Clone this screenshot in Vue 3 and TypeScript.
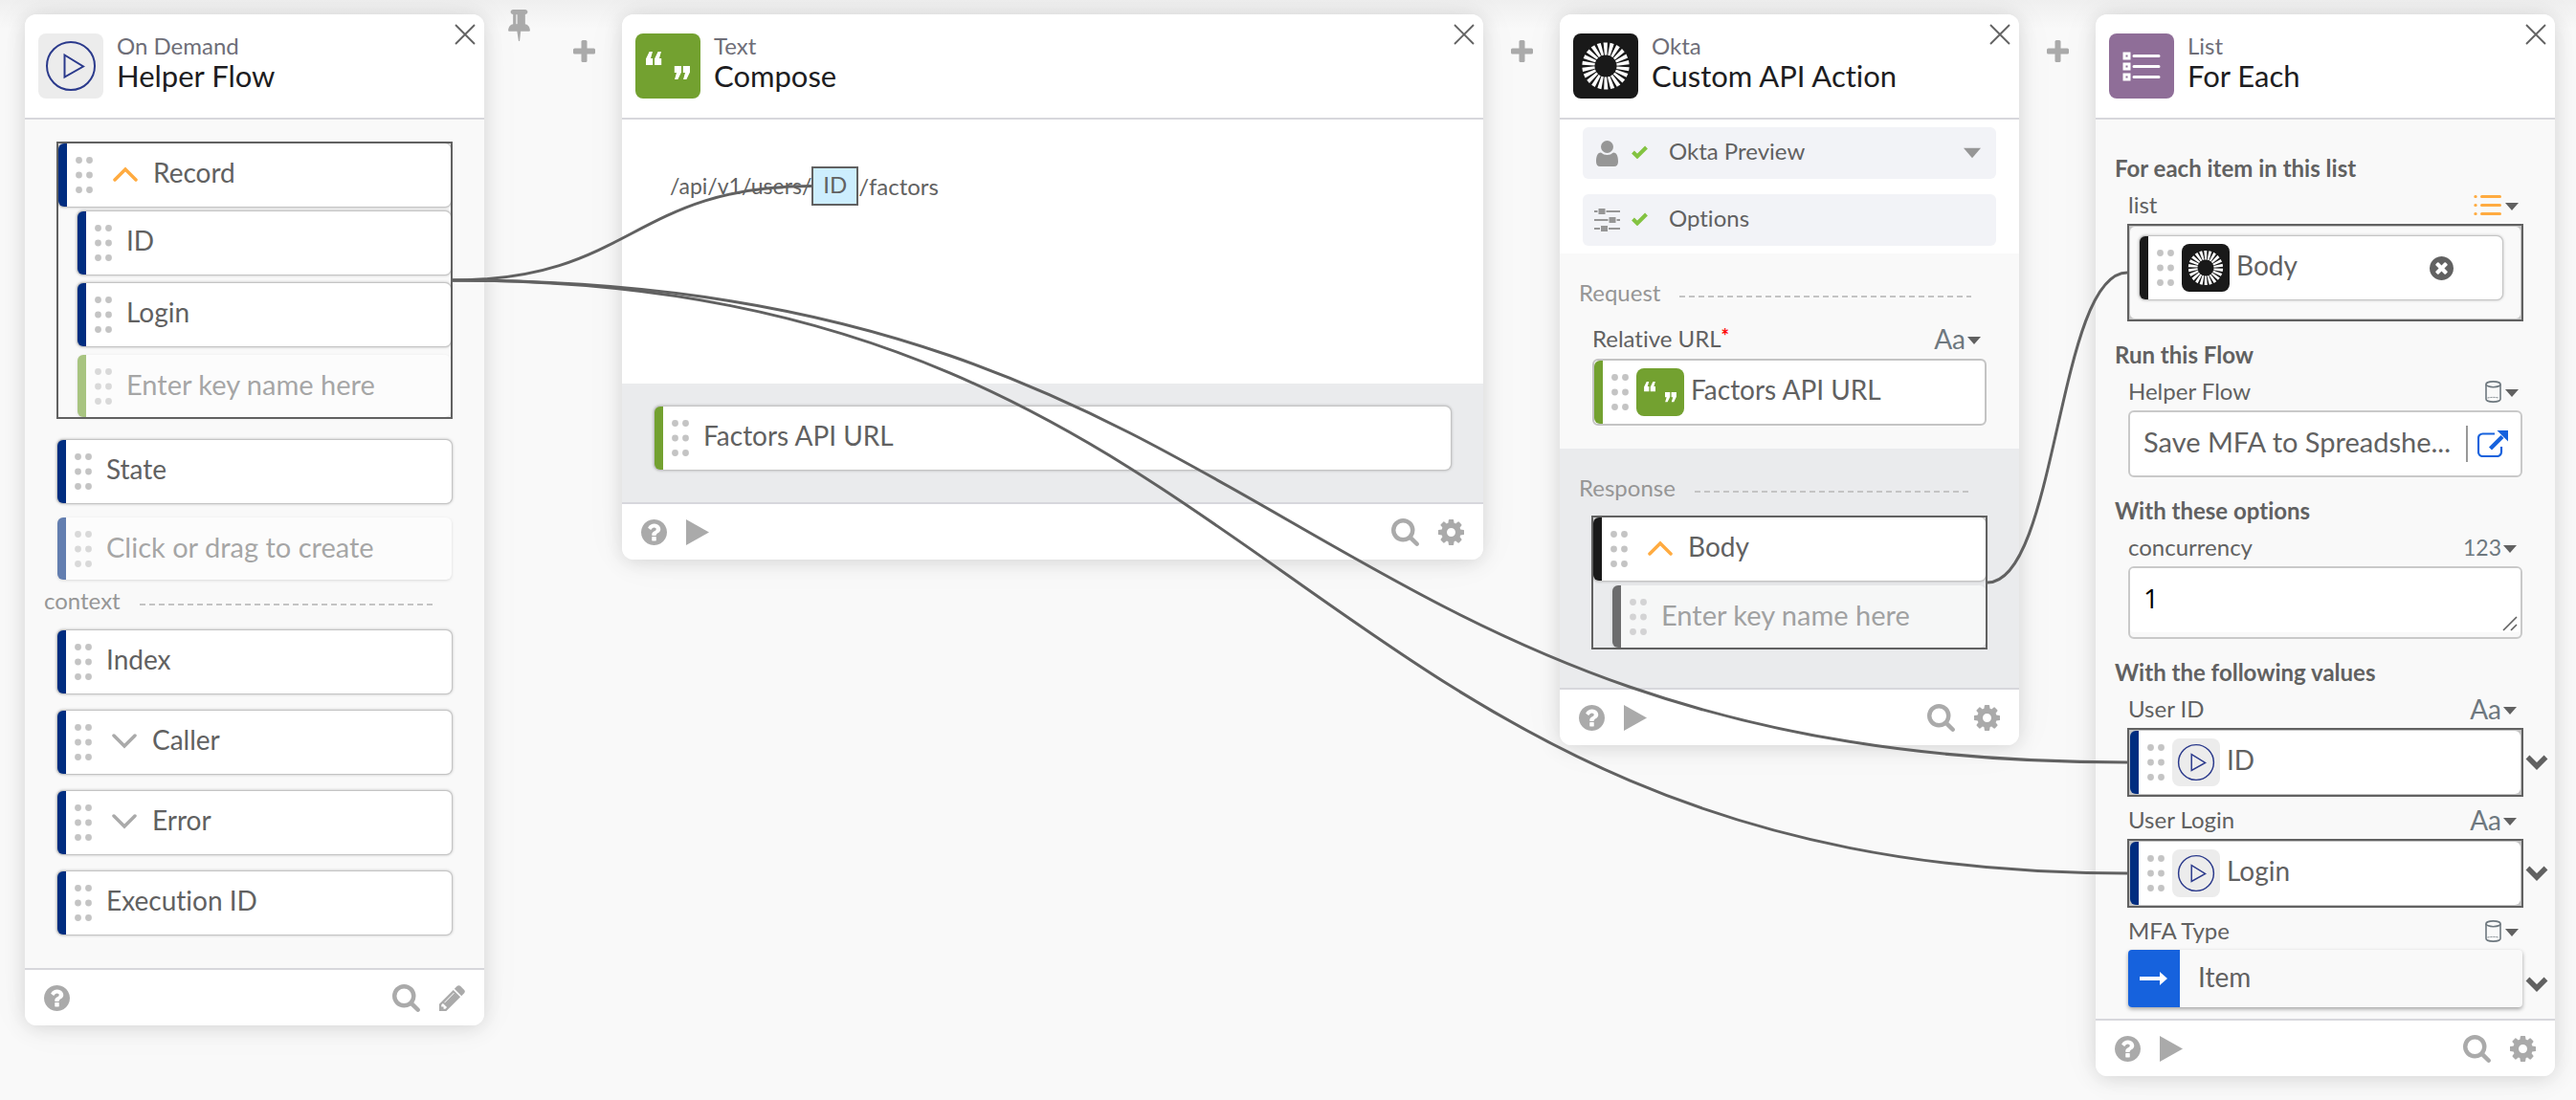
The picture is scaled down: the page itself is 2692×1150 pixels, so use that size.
<script setup lang="ts">
import { h, nextTick, onBeforeUnmount, onMounted, ref } from 'vue'

interface IconShape {
  box: string
  w: number
  h: number
  body: string
}

const rays = (count: number): string =>
  Array.from(
    { length: count },
    (_, i) => `<path transform="rotate(${(i * 360) / count} 34 34)" d="M32.9 22.5 31.6 9.4h4.2l-.4 13.1z"/>`,
  ).join('')

const mark = 'M0 14V7.500L3.600 0H7L5 7h2.200v7z'
const quotes =
  `<path transform="translate(11 19)" d="${mark}"/><path transform="translate(20 19)" d="${mark}"/>` +
  `<path transform="translate(57 48) rotate(180)" d="${mark}"/><path transform="translate(48 48) rotate(180)" d="${mark}"/>`

const icons: Record<string, IconShape> = {
  play: {
    box: '0 0 68 68', w: 68, h: 68,
    body: '<g fill="none" stroke="#2b3a8c" stroke-width="2"><circle cx="34" cy="34" r="25"/><path d="M27.500 22.500 47 34.500 27.500 45.500z" stroke-linejoin="miter"/></g>',
  },
  quotes: { box: '0 0 68 68', w: 68, h: 68, body: `<g fill="#fff">${quotes}</g>` },
  okta: { box: '0 0 68 68', w: 68, h: 68, body: `<g fill="#fff">${rays(22)}</g>` },
  listCard: {
    box: '0 0 68 68', w: 68, h: 68,
    body: '<g fill="none" stroke="#fff" stroke-width="3"><path d="M16 21h5v5h-5zM16 32h5v5h-5zM16 43h5v5h-5z"/><path d="M26 23.500h26M26 34.500h26M26 45.500h26" stroke-linecap="round"/></g>',
  },
  grip: {
    box: '0 0 18 38', w: 18, h: 38,
    body: [3.5, 14.5].map((x) => [3.5, 19, 34.5].map((y) => `<circle cx="${x}" cy="${y}" r="3.4"/>`).join('')).join(''),
  },
  up: { box: '0 0 26 16', w: 26, h: 16, body: '<path d="M2 14 13 3l11 11" fill="none" stroke="currentColor" stroke-width="3.500" stroke-linecap="round"/>' },
  down: { box: '0 0 26 16', w: 26, h: 16, body: '<path d="M2 2l11 11L24 2" fill="none" stroke="currentColor" stroke-width="3.500" stroke-linecap="round"/>' },
  thickDown: { box: '0 0 24 16', w: 24, h: 16, body: '<path d="M2.500 2.500 12 12l9.500-9.500" fill="none" stroke="currentColor" stroke-width="5.500"/>' },
  close: { box: '0 0 22 22', w: 22, h: 22, body: '<path d="M1 1l20 20M21 1 1 21" fill="none" stroke="currentColor" stroke-width="1.800"/>' },
  plus: { box: '0 0 23 23', w: 23, h: 23, body: '<rect x="8.500" y="0" width="6" height="23" rx="1.500"/><rect x="0" y="8.500" width="23" height="6" rx="1.500"/>' },
  pin: {
    box: '320 128 1152 1664', w: 23, h: 33,
    body: '<path d="M800 864v-448q0-14-9-23t-23-9-23 9-9 23v448q0 14 9 23t23 9 23-9 9-23zm672 352q0 26-19 45t-45 19h-429l-51 483q-2 12-10.500 20.500t-20.500 8.500h-1q-27 0-32-27l-76-485h-404q-26 0-45-19t-19-45q0-123 78.500-221.500t177.500-98.500v-512q-52 0-90-38t-38-90 38-90 90-38h640q52 0 90 38t38 90-38 90-90 38v512q99 0 177.500 98.500t78.500 221.500z"/>',
  },
  help: {
    box: '128 128 1536 1536', w: 27, h: 27,
    body: '<path d="M1024 1376v-192q0-14-9-23t-23-9h-192q-14 0-23 9t-9 23v192q0 14 9 23t23 9h192q14 0 23-9t9-23zm256-672q0-88-55.500-163t-138.500-116-170-41q-243 0-371 213-15 24 8 42l132 100q7 6 19 6 16 0 25-12 53-68 86-92 34-24 86-24 48 0 85.500 26t37.500 59q0 38-20 61t-68 45q-63 28-115.500 86.500t-52.500 125.500v36q0 14 9 23t23 9h192q14 0 23-9t9-23q0-19 21.500-49.500t54.500-49.500q32-18 49-28.500t46-35 44.500-48 28-60.500 12.500-81zm384 192q0 209-103 385.500t-279.500 279.500-385.500 103-385.500-103-279.500-279.500-103-385.500 103-385.500 279.500-279.500 385.500-103 385.500 103 279.500 279.500 103 385.500z"/>',
  },
  run: { box: '0 0 24 27', w: 24, h: 27, body: '<path d="M0 0l24 13.500L0 27z"/>' },
  search: {
    box: '64 128 1664 1664', w: 29, h: 29,
    body: '<path d="M1216 832q0-185-131.500-316.500t-316.500-131.500-316.500 131.500-131.500 316.500 131.500 316.500 316.500 131.500 316.500-131.500 131.500-316.500zm512 832q0 52-38 90t-90 38q-54 0-90-38l-343-342q-179 124-399 124-143 0-273.500-55.500t-225-150-150-225-55.500-273.500 55.500-273.500 150-225 225-150 273.500-55.500 273.500 55.500 225 150 150 225 55.500 273.500q0 220-124 399l343 343q37 37 37 90z"/>',
  },
  gear: {
    box: '128 128 1536 1536', w: 27, h: 27,
    body: '<path d="M1152 896q0-106-75-181t-181-75-181 75-75 181 75 181 181 75 181-75 75-181zm512-109v222q0 12-8 23t-20 13l-185 28q-19 54-39 91 35 50 107 138 10 12 10 25t-9 23q-27 37-99 108t-94 71q-12 0-26-9l-138-108q-44 23-91 38-16 136-29 186-7 28-36 28h-222q-14 0-24.500-8.500t-11.500-21.500l-28-184q-49-16-90-37l-141 107q-10 9-25 9-14 0-25-11-126-114-165-168-7-10-7-23 0-12 8-23 15-21 51-66.500t54-70.500q-27-50-41-99l-183-27q-13-2-21-12.500t-8-23.500v-222q0-12 8-23t19-13l186-28q14-46 39-92-40-57-107-138-10-12-10-24 0-10 9-23 26-36 98.500-107.500t94.500-71.500q13 0 26 10l138 107q44-23 91-38 16-136 29-186 7-28 36-28h222q14 0 24.500 8.500t11.500 21.500l28 184q49 16 90 37l142-107q9-9 24-9 13 0 25 10 129 119 165 170 7 8 7 22 0 12-8 23-15 21-51 66.500t-54 70.500q26 50 41 98l183 28q13 2 21 12.500t8 23.500z"/>',
  },
  pencil: {
    box: '128 140 1524 1524', w: 27, h: 27,
    body: '<path d="M491 1536l91-91-235-235-91 91v107h128v128h107zm523-928q0-22-22-22-10 0-17 7l-542 542q-7 7-7 17 0 22 22 22 10 0 17-7l542-542q7-7 7-17zm-54-192l416 416-832 832h-416v-416zm683 96q0 53-37 90l-166 166-416-416 166-165q36-38 90-38 53 0 91 38l235 234q37 39 37 91z"/>',
  },
  remove: {
    box: '128 128 1536 1536', w: 25, h: 25,
    body: '<path d="M1277 1122q0-26-19-45l-181-181 181-181q19-19 19-45 0-27-19-46l-90-90q-19-19-46-19-26 0-45 19l-181 181-181-181q-19-19-45-19-27 0-46 19l-90 90q-19 19-19 46 0 26 19 45l181 181-181 181q-19 19-19 45 0 27 19 46l90 90q19 19 46 19 26 0 45-19l181-181 181 181q19 19 45 19 27 0 46-19l90-90q19-19 19-46zm387-226q0 209-103 385.500t-279.500 279.500-385.500 103-385.500-103-279.500-279.500-103-385.500 103-385.500 279.500-279.500 385.500-103 385.500 103 279.500 279.500 103 385.500z"/>',
  },
  user: { box: '0 0 23 27', w: 23, h: 27, body: '<circle cx="11.500" cy="6.500" r="6.500"/><path d="M5 12.500q3 2.500 6.500 2.500t6.500-2.500c4 0 5 5 5 9.500 0 3-1.500 5-4 5H4c-2.500 0-4-2-4-5 0-4.500 1-9.500 5-9.500z"/>' },
  check: { box: '0 0 17 14', w: 17, h: 14, body: '<path d="M1.500 7 6 11.500 15.500 2" fill="none" stroke="currentColor" stroke-width="4"/>' },
  sliders: {
    box: '0 0 27 26', w: 27, h: 26,
    body: '<path d="M0 3h27v2H0zM0 12h27v2H0zM0 21h27v2H0z"/><path d="M4 .5h8v7H4zM15 9.500h8v7h-8zM6.500 18.500h8v7h-8z" stroke="#f2f3f7" stroke-width="1"/>',
  },
  caret: { box: '0 0 14 8', w: 14, h: 8, body: '<path d="M0 0h14L7 8z"/>' },
  list: {
    box: '0 0 29 23', w: 29, h: 23,
    body: '<g fill="none" stroke="currentColor" stroke-width="3" stroke-linecap="round"><path d="M8.500 2.500h19M8.500 11.500h19M8.500 20.500h19"/><path d="M1.800 2.500h.4M1.800 11.500h.4M1.800 20.500h.4"/></g>',
  },
  database: {
    box: '0 0 17 23', w: 17, h: 23,
    body: '<g fill="none" stroke="currentColor" stroke-width="1.600"><ellipse cx="8.500" cy="3.800" rx="7.500" ry="2.900"/><path d="M1 3.800v15.400c0 1.600 3.400 2.900 7.500 2.900s7.500-1.300 7.500-2.900V3.800"/><path d="M2.500 18q6-1.200 12 0" stroke-width="1" stroke-dasharray="2 1"/></g>',
  },
  external: {
    box: '0 0 32 28', w: 32, h: 28,
    body: '<path d="M18 3.500H5.500a4.500 4.500 0 0 0-4.500 4.500v14.500A4.500 4.500 0 0 0 5.500 27h15a4.500 4.500 0 0 0 4.500-4.500V17" fill="none" stroke="currentColor" stroke-width="2.200"/><path d="M13.500 19 26 6.500" stroke="currentColor" stroke-width="4.200"/><path d="M20.500 0H32v11.500z"/>',
  },
  arrow: { box: '0 0 29 14', w: 29, h: 14, body: '<path d="M0 5h21V0l8 7-8 7V9H0z"/>' },
  resize: { box: '0 0 16 16', w: 16, h: 16, body: '<path d="M1 15 15 1M9 15l6-6" fill="none" stroke="currentColor" stroke-width="1.600"/>' },
}

const Icon = (props: { name: string; size?: number }) => {
  const icon = icons[props.name]
  return h('svg', {
    width: props.size ?? icon.w,
    height: props.size ?? icon.h,
    viewBox: icon.box,
    fill: 'currentColor',
    'aria-hidden': 'true',
    innerHTML: icon.body,
  })
}
Icon.props = ['name', 'size']

const contextRows = [
  { label: 'Index', nested: false },
  { label: 'Caller', nested: true },
  { label: 'Error', nested: true },
  { label: 'Execution ID', nested: false },
]

const newKey = ref('')
const newOutput = ref('')
const newBodyKey = ref('')
const concurrency = ref('1')
const connection = ref('Okta Preview')

const canvas = ref<HTMLElement>()
const recordEl = ref<HTMLElement>()
const tokenEl = ref<HTMLElement>()
const bodyEl = ref<HTMLElement>()
const listEl = ref<HTMLElement>()
const userIdEl = ref<HTMLElement>()
const userLoginEl = ref<HTMLElement>()
const wires = ref<string[]>([])

// Each wire runs from the right edge of its source to the left edge of its target.
function wire(from?: HTMLElement, to?: HTMLElement): string {
  if (!from || !to || !canvas.value) return ''
  const origin = canvas.value.getBoundingClientRect()
  const a = from.getBoundingClientRect()
  const b = to.getBoundingClientRect()
  const x1 = a.right - origin.left
  const y1 = a.top + a.height / 2 - origin.top
  const x2 = b.left - origin.left
  const y2 = b.top + b.height / 2 - origin.top
  const mid = (x1 + x2) / 2
  return `M${x1} ${y1}C${mid} ${y1} ${mid} ${y2} ${x2} ${y2}`
}

function route() {
  wires.value = [
    wire(recordEl.value, tokenEl.value),
    wire(recordEl.value, userIdEl.value),
    wire(recordEl.value, userLoginEl.value),
    wire(bodyEl.value, listEl.value),
  ]
}

let observer: ResizeObserver | undefined
onMounted(async () => {
  await nextTick()
  route()
  observer = new ResizeObserver(route)
  if (canvas.value) observer.observe(canvas.value)
  document.fonts.ready.then(route)
})
onBeforeUnmount(() => observer?.disconnect())
</script>

<template>
  <main ref="canvas" class="canvas">
    <article class="card">
      <header class="head">
        <span class="tile tile-flow"><Icon name="play" /></span>
        <div class="titles">
          <p>On Demand</p>
          <h2>Helper Flow</h2>
        </div>
        <button class="close" aria-label="Close Helper Flow"><Icon name="close" /></button>
      </header>

      <div class="body outputs">
        <div ref="recordEl" class="group">
          <div class="row navy">
            <Icon name="grip" class="grip" />
            <button class="fold open" aria-label="Collapse Record"><Icon name="up" /></button>
            <span>Record</span>
          </div>
          <div class="row navy child"><Icon name="grip" class="grip" /><span>ID</span></div>
          <div class="row navy child"><Icon name="grip" class="grip" /><span>Login</span></div>
          <label class="row green child ghost">
            <Icon name="grip" class="grip" />
            <input v-model="newKey" type="text" placeholder="Enter key name here" aria-label="Record key name" />
          </label>
        </div>
        <div class="row navy state"><Icon name="grip" class="grip" /><span>State</span></div>
        <label class="row navy ghost">
          <Icon name="grip" class="grip" />
          <input v-model="newOutput" type="text" placeholder="Click or drag to create" aria-label="New field" />
        </label>
        <h3 class="divider context">context</h3>
        <div class="stack">
          <div v-for="row in contextRows" :key="row.label" class="row navy">
            <Icon name="grip" class="grip" />
            <button v-if="row.nested" class="fold" :aria-label="'Expand ' + row.label"><Icon name="down" /></button>
            <span>{{ row.label }}</span>
          </div>
        </div>
      </div>

      <footer class="foot">
        <button aria-label="Help"><Icon name="help" /></button>
        <span class="spacer"></span>
        <button aria-label="Search"><Icon name="search" /></button>
        <button aria-label="Edit"><Icon name="pencil" /></button>
      </footer>
    </article>

    <div class="pin"><button aria-label="Pin card"><Icon name="pin" /></button></div>
    <div class="add"><button aria-label="Add step"><Icon name="plus" /></button></div>

    <article class="card wide">
      <header class="head">
        <span class="tile tile-text"><Icon name="quotes" /></span>
        <div class="titles">
          <p>Text</p>
          <h2>Compose</h2>
        </div>
        <button class="close" aria-label="Close Compose"><Icon name="close" /></button>
      </header>
      <div class="compose">
        <span>/api/v1/users/</span><span ref="tokenEl" class="token">ID</span><span>/factors</span>
      </div>
      <div class="result">
        <div class="row green"><Icon name="grip" class="grip" /><span>Factors API URL</span></div>
      </div>
      <footer class="foot">
        <button aria-label="Help"><Icon name="help" /></button>
        <button aria-label="Run"><Icon name="run" /></button>
        <span class="spacer"></span>
        <button aria-label="Search"><Icon name="search" /></button>
        <button aria-label="Settings"><Icon name="gear" /></button>
      </footer>
    </article>

    <div class="add"><button aria-label="Add step"><Icon name="plus" /></button></div>

    <article class="card">
      <header class="head">
        <span class="tile tile-okta"><Icon name="okta" /></span>
        <div class="titles">
          <p>Okta</p>
          <h2>Custom API Action</h2>
        </div>
        <button class="close" aria-label="Close Custom API Action"><Icon name="close" /></button>
      </header>
      <div class="settings">
        <label class="setting">
          <span class="glyph"><Icon name="user" /></span>
          <Icon name="check" class="check" />
          <select v-model="connection" aria-label="Connection">
            <option>Okta Preview</option>
          </select>
          <Icon name="caret" :size="18" class="caret" />
        </label>
        <button class="setting">
          <span class="glyph"><Icon name="sliders" /></span>
          <Icon name="check" class="check" />
          <span>Options</span>
        </button>
      </div>
      <div class="section request">
        <h3 class="divider">Request</h3>
        <div class="label">
          <span>Relative URL<sup>*</sup></span>
          <button class="type">Aa<Icon name="caret" /></button>
        </div>
        <div class="frame">
          <div class="row flat green">
            <Icon name="grip" class="grip" />
            <span class="tile small tile-text"><Icon name="quotes" :size="50" /></span>
            <span>Factors API URL</span>
          </div>
        </div>
      </div>
      <div class="section response">
        <h3 class="divider">Response</h3>
        <div ref="bodyEl" class="group">
          <div class="row black">
            <Icon name="grip" class="grip" />
            <button class="fold open" aria-label="Collapse Body"><Icon name="up" /></button>
            <span>Body</span>
          </div>
          <label class="row black child ghost">
            <Icon name="grip" class="grip" />
            <input v-model="newBodyKey" type="text" placeholder="Enter key name here" aria-label="Body key name" />
          </label>
        </div>
      </div>
      <footer class="foot">
        <button aria-label="Help"><Icon name="help" /></button>
        <button aria-label="Run"><Icon name="run" /></button>
        <span class="spacer"></span>
        <button aria-label="Search"><Icon name="search" /></button>
        <button aria-label="Settings"><Icon name="gear" /></button>
      </footer>
    </article>

    <div class="add"><button aria-label="Add step"><Icon name="plus" /></button></div>

    <article class="card">
      <header class="head">
        <span class="tile tile-list"><Icon name="listCard" /></span>
        <div class="titles">
          <p>List</p>
          <h2>For Each</h2>
        </div>
        <button class="close" aria-label="Close For Each"><Icon name="close" /></button>
      </header>

      <div class="body form">
        <h3>For each item in this list</h3>
        <div class="label">
          <span>list</span>
          <button class="type orange" aria-label="Type: list"><Icon name="list" /><Icon name="caret" /></button>
        </div>
        <div ref="listEl" class="linked">
          <div class="slot roomy">
            <div class="row black">
              <Icon name="grip" class="grip" />
              <span class="tile small tile-okta"><Icon name="okta" :size="50" /></span>
              <span>Body</span>
              <button class="remove" aria-label="Remove Body"><Icon name="remove" /></button>
            </div>
          </div>
        </div>

        <h3>Run this Flow</h3>
        <div class="label">
          <span>Helper Flow</span>
          <button class="type" aria-label="Type: record"><Icon name="database" /><Icon name="caret" /></button>
        </div>
        <div class="picker">
          <button class="flow-name">Save MFA to Spreadshe...</button>
          <a href="#" aria-label="Open helper flow"><Icon name="external" /></a>
        </div>

        <h3>With these options</h3>
        <div class="label">
          <label for="concurrency">concurrency</label>
          <button class="type number">123<Icon name="caret" /></button>
        </div>
        <div class="number-box">
          <textarea id="concurrency" v-model="concurrency" rows="1"></textarea>
          <Icon name="resize" class="resize" />
        </div>

        <h3>With the following values</h3>
        <div class="label">
          <span>User ID</span>
          <button class="type">Aa<Icon name="caret" /></button>
        </div>
        <div class="value">
          <div ref="userIdEl" class="linked">
            <div class="slot">
              <div class="row flat navy">
                <Icon name="grip" class="grip" />
                <span class="tile small tile-flow"><Icon name="play" :size="50" /></span>
                <span>ID</span>
              </div>
            </div>
          </div>
          <button class="more" aria-label="User ID options"><Icon name="thickDown" /></button>
        </div>
        <div class="label">
          <span>User Login</span>
          <button class="type">Aa<Icon name="caret" /></button>
        </div>
        <div class="value">
          <div ref="userLoginEl" class="linked">
            <div class="slot">
              <div class="row flat navy">
                <Icon name="grip" class="grip" />
                <span class="tile small tile-flow"><Icon name="play" :size="50" /></span>
                <span>Login</span>
              </div>
            </div>
          </div>
          <button class="more" aria-label="User Login options"><Icon name="thickDown" /></button>
        </div>
        <div class="label">
          <span>MFA Type</span>
          <button class="type" aria-label="Type: record"><Icon name="database" /><Icon name="caret" /></button>
        </div>
        <div class="value">
          <div class="item">
            <span class="item-arrow"><Icon name="arrow" /></span>
            <span>Item</span>
          </div>
          <button class="more" aria-label="MFA Type options"><Icon name="thickDown" /></button>
        </div>
      </div>

      <footer class="foot">
        <button aria-label="Help"><Icon name="help" /></button>
        <button aria-label="Run"><Icon name="run" /></button>
        <span class="spacer"></span>
        <button aria-label="Search"><Icon name="search" /></button>
        <button aria-label="Settings"><Icon name="gear" /></button>
      </footer>
    </article>

    <svg class="wires" aria-hidden="true">
      <path v-for="(d, i) in wires" :key="i" :d="d" />
    </svg>
  </main>
</template>

<style>
body {
  margin: 0;
  background: #f9f9f9;
}
</style>

<style scoped>
.canvas {
  position: relative;
  box-sizing: border-box;
  min-height: 100vh;
  display: flex;
  align-items: flex-start;
  padding: 15px 22px 25px 26px;
  overflow: hidden;
  background: linear-gradient(#efefef, #f9f9f9 30px);
  color: #616161;
  font: 24px/30px Lato, "Open Sans", sans-serif;
  font-variant-ligatures: none;
}

.canvas * {
  box-sizing: border-box;
}

h2, h3, p {
  margin: 0;
}

button, input, select, textarea {
  margin: 0;
  padding: 0;
  border: 0;
  outline: 0;
  background: none;
  color: inherit;
  font: inherit;
}

button {
  display: flex;
  align-items: center;
  flex: none;
  cursor: pointer;
}

svg {
  display: block;
  flex: none;
}

.wires {
  position: absolute;
  inset: 0;
  width: 100%;
  height: 100%;
  pointer-events: none;
  fill: none;
  stroke: #616161;
  stroke-width: 3;
}

/* Gaps between cards */
.pin {
  flex: none;
  width: 64px;
  padding-left: 25px;
  margin-top: -5px;
  color: #aaa;
}

.add {
  flex: none;
  width: 80px;
  display: flex;
  justify-content: center;
  padding-top: 27px;
  color: #aaa;
}

/* Cards */
.card {
  flex: 480 1 0;
  min-width: 0;
  border-radius: 12px;
  background: #f9f9f9;
  box-shadow: 0 2px 20px rgba(0, 0, 0, 0.13), 0 0 50px rgba(0, 0, 0, 0.04);
}

.card.wide {
  flex-grow: 900;
}

.head {
  display: flex;
  align-items: flex-start;
  height: 110px;
  padding: 18px 9px 0 14px;
  border-bottom: 2px solid #d7d7dc;
  border-radius: 12px 12px 0 0;
  background: #fff;
}

.tile {
  flex: none;
  margin-top: 2px;
  border-radius: 8px;
  overflow: hidden;
}

.tile.small {
  margin: 0 7px 0 8px;
}

.tile-flow { background: #ececec; }
.tile-text { background: #73a130; }
.tile-okta { background: #191919; }
.tile-list { background: #8f6e98; }

.titles {
  flex: 1;
  padding-left: 14px;
}

.titles p {
  color: #6e6e78;
}

.titles h2 {
  color: #1d1d21;
  font-size: 31px;
  font-weight: 400;
  line-height: 33px;
}

.close {
  margin-top: -8px;
  color: #616161;
}

.foot {
  display: flex;
  align-items: center;
  gap: 20px;
  height: 60px;
  padding: 0 20px;
  border-top: 2px solid #d7d7dc;
  border-radius: 0 0 12px 12px;
  background: #fff;
  color: #aaa;
}

.spacer {
  flex: 1;
}

.outputs {
  padding: 23px 34px 35px;
}

/* Rows */
.row {
  display: flex;
  align-items: center;
  height: 66px;
  border-left: 9px solid;
  border-radius: 6px;
  background: #fff;
  box-shadow: 0 0 0 1px #c4c4c4, 0 0 3px 1px rgba(0, 0, 0, 0.25);
  font-size: 28px;
}

.row.flat {
  box-shadow: none;
}

.row.navy { border-left-color: #002d80; }
.row.green { border-left-color: #73a130; }
.row.black { border-left-color: #191919; }

.row > span:not(.tile),
.row > input {
  padding-bottom: 6px;
}

.row > .grip + span:not(.tile),
.row > input {
  padding-left: 15px;
}

.row > input {
  flex: 1;
  min-width: 0;
  height: 100%;
  padding-bottom: 4px;
  font-size: 29px;
}

input::placeholder {
  color: #707070;
  opacity: 1;
}

.grip {
  margin-left: 9px;
  color: #c4c4c4;
}

.fold {
  margin: 0 16px 2px 21px;
  color: #aaa;
}

.fold.open {
  color: #ffab40;
}

.row.ghost {
  height: 65px;
  opacity: 0.6;
  box-shadow: 0 1px 3px rgba(0, 0, 0, 0.2);
}

.group {
  position: relative;
  margin: 0 -1px;
  padding: 2px;
}

.group::after {
  content: "";
  position: absolute;
  inset: 0;
  border: 2px solid #616161;
  pointer-events: none;
}

.child {
  margin: 9px 0 0 20px;
}

.row:first-child + .child {
  margin-top: 5px;
}

.state {
  margin: 22px 0 15px;
}

.stack {
  display: grid;
  gap: 18px;
}

.divider {
  display: flex;
  align-items: center;
  gap: 20px;
  color: #969696;
  font-size: inherit;
  font-weight: 400;
}

.divider::after {
  content: "";
  flex: 1;
  height: 2px;
  margin-top: 8px;
  background: repeating-linear-gradient(90deg, #c4c4c4 0 6px, transparent 6px 10px);
}

.context {
  margin: 7px 19px 16px -14px;
}

/* Compose card */
.compose {
  display: flex;
  align-items: flex-start;
  height: 276px;
  padding: 49px 50px 0;
  background: #fff;
  font-size: 23px;
  line-height: 41px;
}

.token {
  height: 41px;
  padding: 0 10px;
  border: 2px solid #616161;
  background: #cdeefe;
  font-size: 24px;
  line-height: 34px;
}

.token + span {
  font-size: 24px;
}

.result {
  padding: 24px 34px 34px;
  background: #eaebed;
}

/* Action card */
.settings {
  display: grid;
  gap: 16px;
  padding: 8px 24px;
  background: #fff;
}

.setting {
  display: flex;
  align-items: center;
  height: 54px;
  padding: 0 16px 0 10px;
  border-radius: 6px;
  background: #f2f3f7;
  text-align: left;
}

.setting > select,
.setting > span:last-child {
  flex: 1;
  height: 30px;
  margin: 0 0 5px 22px;
  appearance: none;
}

.glyph {
  flex: none;
  width: 30px;
  display: flex;
  justify-content: center;
  color: #969696;
}

.check {
  margin: 0 0 2px 11px;
  color: #83c341;
}

.caret {
  color: #969696;
}

.section {
  padding: 26px 33px 0;
}

.section .divider {
  margin: 0 17px 18px -13px;
}

.request {
  padding-bottom: 24px;
}

.response {
  padding-bottom: 40px;
  background: #eaebed;
}

.response .divider {
  margin-bottom: 14px;
}

.response .group {
  margin: 0;
}

.label {
  display: flex;
  justify-content: space-between;
  height: 30px;
  padding: 0 5px 0 1px;
  margin-bottom: 6px;
}

sup {
  color: #f00;
  font-size: 20px;
  font-weight: 700;
  line-height: 0;
  vertical-align: 4px;
}

.type {
  gap: 2px;
  color: #6e787f;
  font-size: 28px;
}

.type.number {
  font-size: 23px;
}

.type svg:last-child {
  margin-top: 4px;
  color: #616161;
}

.type svg:first-child {
  margin-right: 2px;
}

.type.orange {
  color: #ffab40;
}

.frame {
  margin: 0 1px;
  border: 2px solid #c4c4c4;
  border-radius: 6px;
}

/* For Each card */
.form {
  padding: 36px 33px 0;
}

.form h3 {
  margin: 20px 0 8px -13px;
  font-size: 24px;
  line-height: 30px;
  font-weight: 700;
}

.form h3:first-child {
  margin-top: 0;
}

.form .label {
  margin-bottom: 5px;
}

.value + .label {
  margin-top: 9px;
}

.linked {
  flex: 1;
  border: 2px solid #616161;
  background: #c4c4c4;
}

.slot {
  padding: 1px;
}

.slot.roomy {
  padding: 10px 19px 20px 10px;
  border: 1px solid #c4c4c4;
  border-radius: 6px;
  background: #f9f9f9;
}

.remove {
  margin-left: auto;
  margin-right: 51px;
}

.picker {
  display: flex;
  align-items: center;
  height: 70px;
  margin: 0 1px;
  border: 2px solid #c9c9c9;
  border-radius: 6px;
  background: #fff;
}

.flow-name {
  flex: 1;
  min-width: 0;
  padding: 0 0 5px 14px;
  font-size: 29px;
  white-space: nowrap;
}

.picker a {
  flex: none;
  display: flex;
  align-items: center;
  height: 38px;
  padding: 0 13px 0 10px;
  border-left: 2px solid #999;
  color: #1662dd;
}

.number-box {
  position: relative;
  height: 76px;
  margin: 0 1px;
  border: 2px solid #c9c9c9;
  border-radius: 6px;
}

.number-box textarea {
  display: block;
  width: 100%;
  height: 67px;
  padding: 12px 14px;
  border-radius: 4px;
  background: #fff;
  color: #000;
  font: 28px/38px "Open Sans", sans-serif;
  resize: none;
  overflow: hidden;
}

.resize {
  position: absolute;
  right: 3px;
  bottom: 6px;
}

.value {
  display: flex;
  align-items: flex-start;
  margin-right: -33px;
}

.more {
  width: 33px;
  height: 72px;
  padding-left: 2px;
}

.item {
  flex: 1;
  display: flex;
  height: 60px;
  margin: 0 1px;
  border-radius: 4px;
  overflow: hidden;
  box-shadow: 0 2px 4px rgba(0, 0, 0, 0.35);
  font-size: 28px;
  line-height: 56px;
}

.item-arrow {
  display: flex;
  align-items: center;
  width: 54px;
  padding-left: 12px;
  margin-right: 19px;
  background: #1662dd;
  color: #fff;
}
</style>
